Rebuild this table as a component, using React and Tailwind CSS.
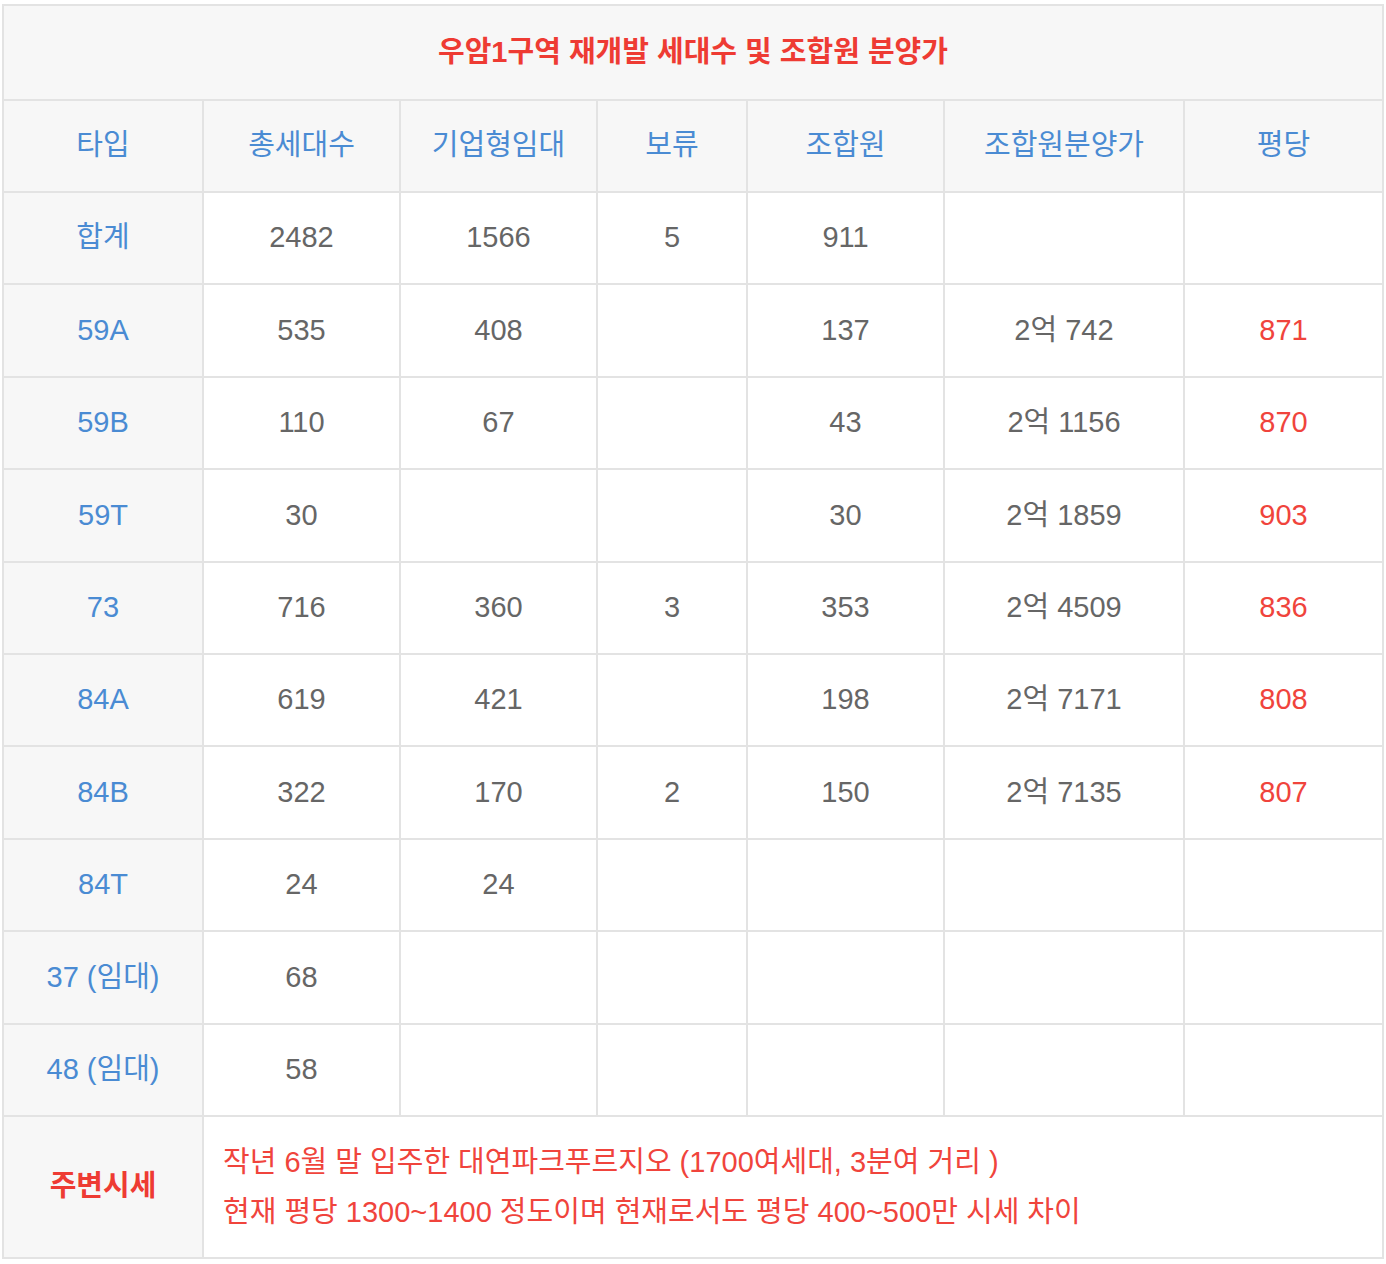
import React from 'react';

const rows = [
  { type: '합계', total: '2482', rent: '1566', hold: '5', member: '911', price: '', pyeong: '' },
  { type: '59A', total: '535', rent: '408', hold: '', member: '137', price: '2억 742', pyeong: '871' },
  { type: '59B', total: '110', rent: '67', hold: '', member: '43', price: '2억 1156', pyeong: '870' },
  { type: '59T', total: '30', rent: '', hold: '', member: '30', price: '2억 1859', pyeong: '903' },
  { type: '73', total: '716', rent: '360', hold: '3', member: '353', price: '2억 4509', pyeong: '836' },
  { type: '84A', total: '619', rent: '421', hold: '', member: '198', price: '2억 7171', pyeong: '808' },
  { type: '84B', total: '322', rent: '170', hold: '2', member: '150', price: '2억 7135', pyeong: '807' },
  { type: '84T', total: '24', rent: '24', hold: '', member: '', price: '', pyeong: '' },
  { type: '37 (임대)', total: '68', rent: '', hold: '', member: '', price: '', pyeong: '' },
  { type: '48 (임대)', total: '58', rent: '', hold: '', member: '', price: '', pyeong: '' },
];

const headers = ['타입', '총세대수', '기업형임대', '보류', '조합원', '조합원분양가', '평당'];

export default function App() {
  const cell = "border-2 border-[#e3e3e3] text-center align-middle";
  return (
    <div className="min-h-screen bg-white pt-[4px] pl-[2px]" style={{ fontFamily: '"Liberation Sans", "Noto Sans CJK KR", sans-serif' }}>
      <table className="table-fixed border-collapse w-[1380px] text-[29px]">
        <colgroup>
          <col className="w-[200px]" />
          <col className="w-[197px]" />
          <col className="w-[197px]" />
          <col className="w-[150px]" />
          <col className="w-[197px]" />
          <col className="w-[240px]" />
          <col className="w-[199px]" />
        </colgroup>
        <tbody>
          <tr className="h-[95px] bg-[#f7f7f7]">
            <td colSpan={7} className={cell + " text-[#ee3b33] font-bold"}>
              우암1구역 재개발 세대수 및 조합원 분양가
            </td>
          </tr>
          <tr className="h-[92px] bg-[#f7f7f7]">
            {headers.map((h) => (
              <td key={h} className={cell + " text-[#4a8bd3]"}>{h}</td>
            ))}
          </tr>
          {rows.map((r) => (
            <tr key={r.type} className="h-[92.4px]">
              <td className={cell + " bg-[#f7f7f7] text-[#4a8bd3]"}>{r.type}</td>
              <td className={cell + " text-[#666666]"}>{r.total}</td>
              <td className={cell + " text-[#666666]"}>{r.rent}</td>
              <td className={cell + " text-[#666666]"}>{r.hold}</td>
              <td className={cell + " text-[#666666]"}>{r.member}</td>
              <td className={cell + " text-[#666666]"}>{r.price}</td>
              <td className={cell + " text-[#f0443c]"}>{r.pyeong}</td>
            </tr>
          ))}
          <tr className="h-[142px]">
            <td className={cell + " bg-[#f7f7f7] text-[#ee3b33] font-bold"}>주변시세</td>
            <td colSpan={6} className="border-2 border-[#e3e3e3] text-left align-middle pl-[19px] text-[#f0443c] leading-[50px]">
              작년 6월 말 입주한 대연파크푸르지오 (1700여세대, 3분여 거리 )<br />
              현재 평당 1300~1400 정도이며 현재로서도 평당 400~500만 시세 차이
            </td>
          </tr>
        </tbody>
      </table>
    </div>
  );
}
